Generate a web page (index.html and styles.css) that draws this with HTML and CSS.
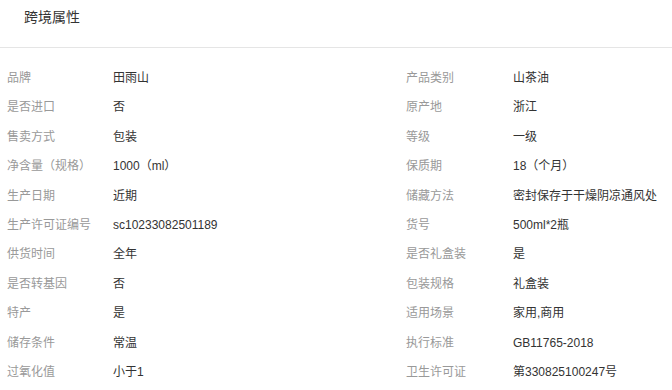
FILE: index.html
```html
<!DOCTYPE html>
<html lang="zh-CN">
<head>
<meta charset="utf-8">
<link rel="stylesheet" href="styles.css">
</head>
<body>
<div class="panel">
  <div class="header"><span class="title">跨境属性</span></div>
  <div class="attrs">
    <div class="k">品牌</div><div class="v">田雨山</div><div class="k">产品类别</div><div class="v">山茶油</div>
    <div class="k">是否进口</div><div class="v">否</div><div class="k">原产地</div><div class="v">浙江</div>
    <div class="k">售卖方式</div><div class="v">包装</div><div class="k">等级</div><div class="v">一级</div>
    <div class="k">净含量（规格）</div><div class="v">1000（ml）</div><div class="k">保质期</div><div class="v">18（个月）</div>
    <div class="k">生产日期</div><div class="v">近期</div><div class="k">储藏方法</div><div class="v">密封保存于干燥阴凉通风处</div>
    <div class="k">生产许可证编号</div><div class="v">sc10233082501189</div><div class="k">货号</div><div class="v">500ml*2瓶</div>
    <div class="k">供货时间</div><div class="v">全年</div><div class="k">是否礼盒装</div><div class="v">是</div>
    <div class="k">是否转基因</div><div class="v">否</div><div class="k">包装规格</div><div class="v">礼盒装</div>
    <div class="k">特产</div><div class="v">是</div><div class="k">适用场景</div><div class="v">家用,商用</div>
    <div class="k">储存条件</div><div class="v">常温</div><div class="k">执行标准</div><div class="v">GB11765-2018</div>
    <div class="k">过氧化值</div><div class="v">小于1</div><div class="k">卫生许可证</div><div class="v">第330825100247号</div>
  </div>
</div>
</body>
</html>
```
FILE: styles.css
```css
html, body {
  margin: 0;
  padding: 0;
  background: #fff;
}
body {
  font-family: "Liberation Sans", Arial, "Noto Sans CJK SC", sans-serif;
  overflow: hidden;
}
.header {
  height: 47px;
  border-bottom: 1px solid #e5e5e5;
  padding: 7px 0 0 24px;
  box-sizing: border-box;
  height: 48px;
}
.title {
  font-size: 14px;
  line-height: 20px;
  color: #333;
}
.attrs {
  display: grid;
  grid-template-columns: 106px 293px 107px 1fr;
  grid-auto-rows: 29.4px;
  padding: 16px 0 0 7px;
  font-size: 12px;
  line-height: 29.4px;
}
.k {
  color: #999;
  white-space: nowrap;
}
.v {
  color: #333;
  white-space: nowrap;
}
```
